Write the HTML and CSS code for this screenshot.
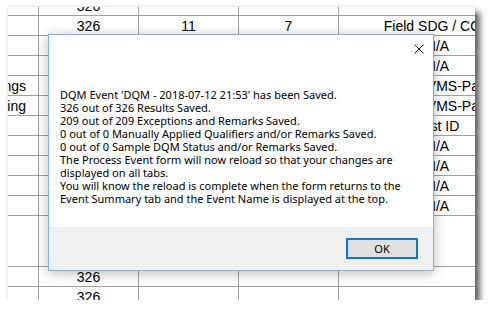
FILE: index.html
```
<!DOCTYPE html>
<html>
<head>
<meta charset="utf-8">
<link rel="stylesheet" href="styles.css">
</head>
<body>
<div class="shot">
  <div class="grid">
    <div class="c"></div><div class="c mid">326</div><div class="c"></div><div class="c"></div><div class="c"></div>
    <div class="c"></div><div class="c mid">326</div><div class="c mid">11</div><div class="c mid">7</div><div class="c mid">Field SDG / COC</div>
    <div class="c"></div><div class="c"></div><div class="c"></div><div class="c"></div><div class="c mid">N/A</div>
    <div class="c"></div><div class="c"></div><div class="c"></div><div class="c"></div><div class="c mid">N/A</div>
    <div class="c end">Settings</div><div class="c"></div><div class="c"></div><div class="c"></div><div class="c mid">EPA/VMS-Pa</div>
    <div class="c end">Warning</div><div class="c"></div><div class="c"></div><div class="c"></div><div class="c mid">EPA/VMS-Pa</div>
    <div class="c"></div><div class="c"></div><div class="c"></div><div class="c"></div><div class="c mid">Test ID</div>
    <div class="c"></div><div class="c"></div><div class="c"></div><div class="c"></div><div class="c mid">N/A</div>
    <div class="c"></div><div class="c"></div><div class="c"></div><div class="c"></div><div class="c mid">N/A</div>
    <div class="c"></div><div class="c"></div><div class="c"></div><div class="c"></div><div class="c mid">N/A</div>
    <div class="c"></div><div class="c"></div><div class="c"></div><div class="c"></div><div class="c mid">N/A</div>
    <div class="c"></div><div class="c"></div><div class="c"></div><div class="c"></div><div class="c"></div>
    <div class="c"></div><div class="c mid">326</div><div class="c"></div><div class="c"></div><div class="c"></div>
    <div class="c"></div><div class="c mid">326</div><div class="c"></div><div class="c"></div><div class="c"></div>
  </div>

  <div class="dialog">
    <div class="dlg-body">
      <div class="dlg-top">
        <span class="close" aria-label="Close">
          <svg width="10" height="10" viewBox="0 0 10 10"><path d="M0.5 0.5 L9.5 9.5 M9.5 0.5 L0.5 9.5" stroke="#1a1a1a" stroke-width="1" fill="none"/></svg>
        </span>
      </div>
      <p class="msg">DQM Event 'DQM - 2018-07-12 21:53' has been Saved.<br>326 out of 326 Results Saved.<br>209 out of 209 Exceptions and Remarks Saved.<br>0 out of 0 Manually Applied Qualifiers and/or Remarks Saved.<br>0 out of 0 Sample DQM Status and/or Remarks Saved.<br>The Process Event form will now reload so that your changes are<br>displayed on all tabs.<br>You will know the reload is complete when the form returns to the<br>Event Summary tab and the Event Name is displayed at the top.</p>
    </div>
    <div class="dlg-foot">
      <button class="ok">OK</button>
    </div>
  </div>
</div>
</body>
</html>
```
FILE: styles.css
```
html, body {
  margin: 0;
  padding: 0;
  background: #ffffff;
}

.shot {
  position: relative;
  margin: 7px 0 0 8px;
  width: 467px;
  height: 293px;
  overflow: hidden;
  background: #ffffff;
  box-shadow: 5px 5px 6px rgba(0, 0, 0, 0.6), 0 0 3px rgba(0, 0, 0, 0.18);
}

.grid {
  display: grid;
  grid-template-columns: 30px 99px 99px 99px 197px;
  grid-template-rows: repeat(11, 19px) 50px 19px 19px;
  gap: 1px;
  background: #a0a0a0;
  margin-top: -11px;
  width: 528px;
  font-family: "Liberation Sans", Arial, sans-serif;
  font-size: 14px;
  color: #000;
}

.c {
  background: #ffffff;
  display: flex;
  align-items: center;
  overflow: hidden;
  white-space: nowrap;
}

.mid {
  justify-content: center;
}

.end {
  justify-content: flex-end;
  padding-right: 12px;
}

.dialog {
  position: absolute;
  left: 40px;
  top: 27px;
  width: 384px;
  border: 1px solid #7fb3e8;
  background: #ffffff;
  box-shadow: 0 2px 12px rgba(0, 0, 0, 0.28);
  font-family: "Noto Sans", "Open Sans", sans-serif;
  font-size: 11px;
  color: #000;
}

.dlg-body {
  height: 192px;
  display: flex;
  flex-direction: column;
}

.dlg-top {
  display: flex;
  justify-content: flex-end;
  padding: 9px 9px 0 0;
  height: 10px;
}

.close {
  display: block;
  width: 10px;
  height: 10px;
}

.close svg {
  display: block;
}

.msg {
  margin: 34px 0 0 11px;
  line-height: 13px;
}

.dlg-foot {
  height: 43px;
  background: #f0f0f0;
  display: flex;
  justify-content: flex-end;
  align-items: flex-start;
  padding: 11px 15px 0 0;
  box-sizing: border-box;
}

.ok {
  width: 72px;
  height: 21px;
  border: 2px solid #0078d7;
  background: #e1e1e1;
  font-family: "Noto Sans", "Open Sans", sans-serif;
  font-size: 11px;
  color: #000;
  padding: 0;
  margin: 0;
}
```
